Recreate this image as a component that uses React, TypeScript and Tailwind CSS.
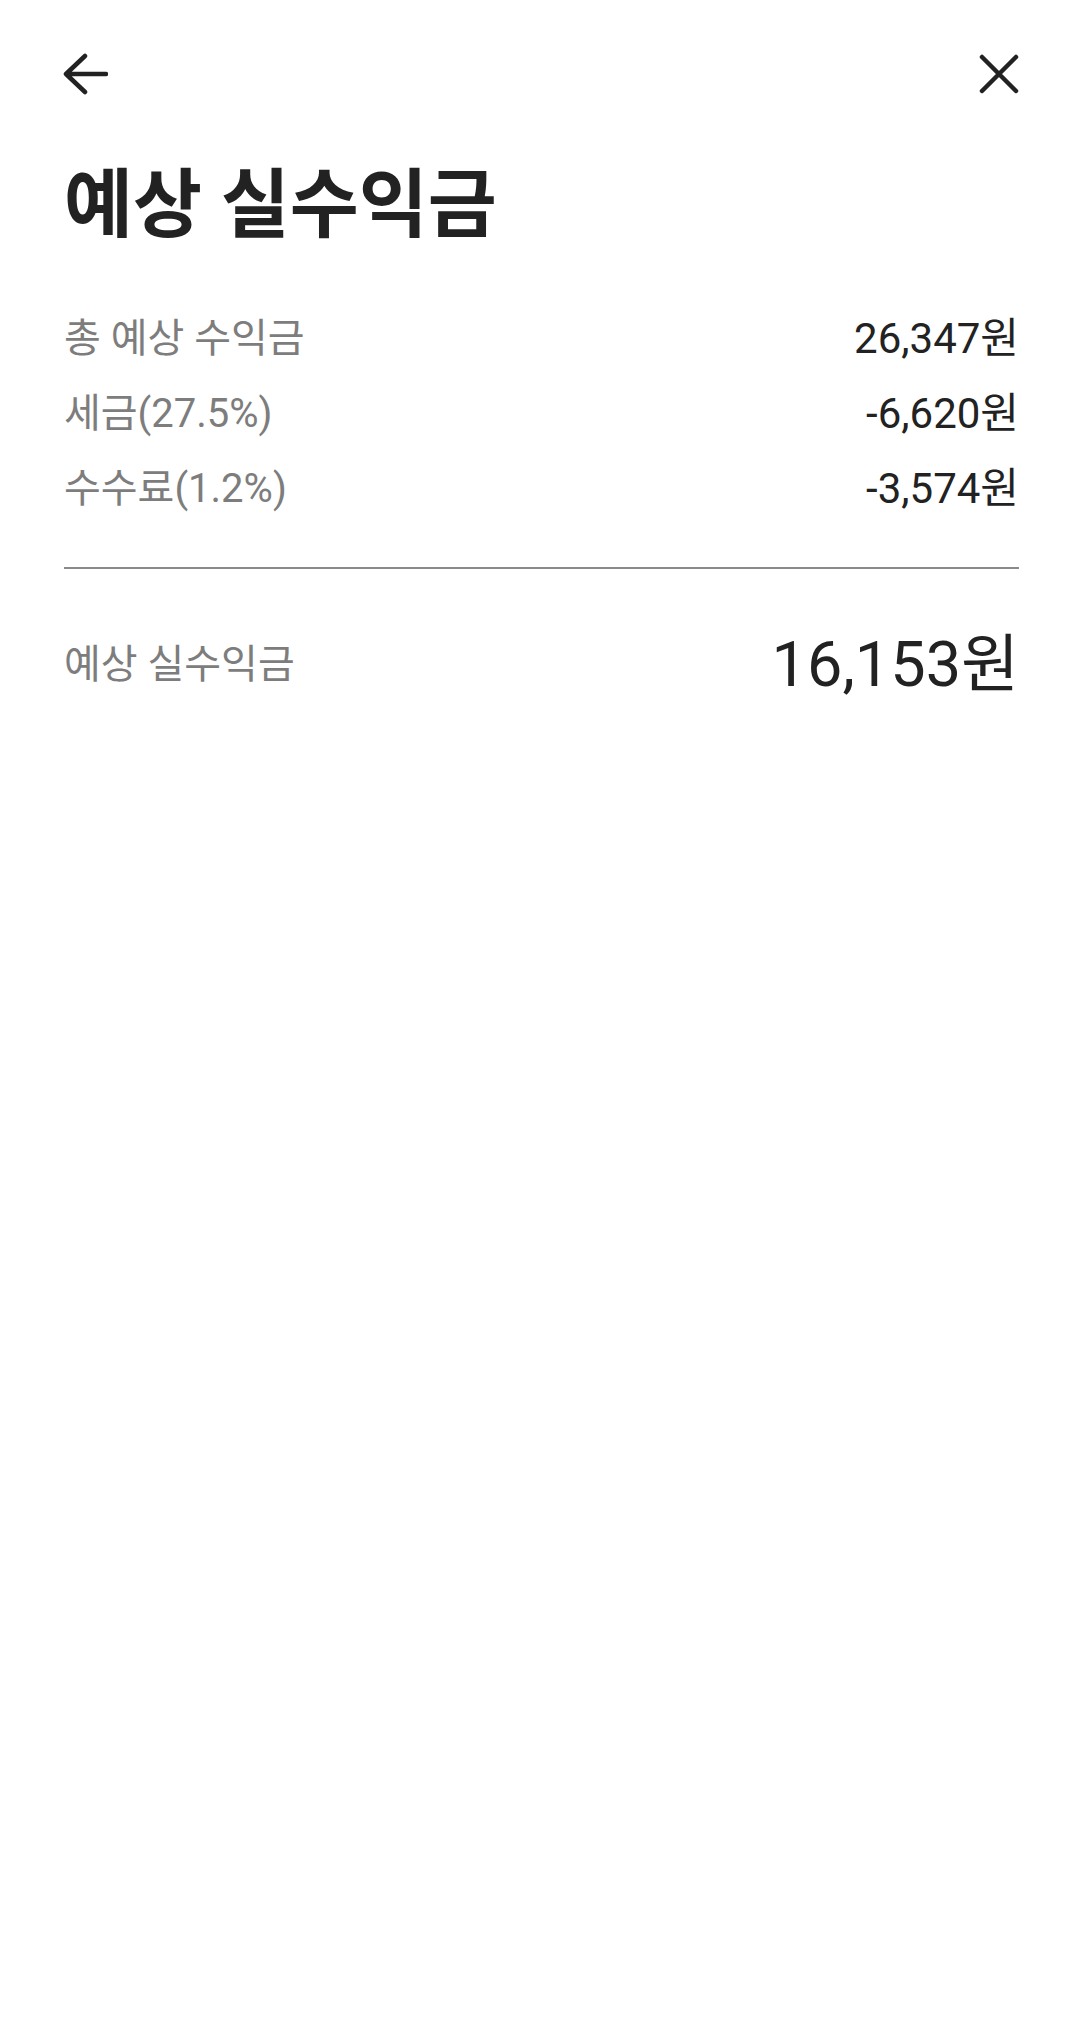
import React from "react";

const rows = [
  { label: "총 예상 수익금", value: "26,347원" },
  { label: "세금(27.5%)", value: "-6,620원" },
  { label: "수수료(1.2%)", value: "-3,574원" },
];

const BackIcon = () => (
  <svg width="48" height="48" viewBox="0 0 48 48" fill="none">
    <path
      d="M25 6 L6 24 L25 42 M6 24 H46"
      stroke="#222222"
      strokeWidth="4.5"
      strokeLinecap="round"
      strokeLinejoin="round"
    />
  </svg>
);

const CloseIcon = () => (
  <svg width="44" height="44" viewBox="0 0 44 44" fill="none">
    <path
      d="M6 5 L40 39 M40 5 L6 39"
      stroke="#222222"
      strokeWidth="4.5"
      strokeLinecap="round"
    />
  </svg>
);

const App = () => {
  return (
    <div
      className="min-h-screen w-full bg-white"
      style={{ fontFamily: 'Roboto, "Noto Sans CJK KR", sans-serif' }}
    >
      <header className="h-[148px] flex items-center justify-between pl-[60px] pr-[60px]">
        <button className="flex items-center">
          <BackIcon />
        </button>
        <button className="flex items-center">
          <CloseIcon />
        </button>
      </header>

      <main className="pl-[64px] pr-[61px]">
        <h1 className="text-[75px] leading-[90px] font-bold text-[#222222] mt-[12px]">
          예상 실수익금
        </h1>

        <div className="mt-[51px]">
          {rows.map((r) => (
            <div key={r.label} className="h-[75px] flex items-center justify-between">
              <span className="text-[40px] text-[#7d7d7d]">{r.label}</span>
              <span className="text-[42px] text-[#222222]">{r.value}</span>
            </div>
          ))}
        </div>

        <div className="mt-[41px] h-[2px] bg-[#8a8a8a]" />

        <div className="h-[192px] flex items-center justify-between">
          <span className="text-[40px] text-[#7d7d7d]">예상 실수익금</span>
          <span className="text-[63px] text-[#222222]">16,153원</span>
        </div>
      </main>
    </div>
  );
};

export default App;
